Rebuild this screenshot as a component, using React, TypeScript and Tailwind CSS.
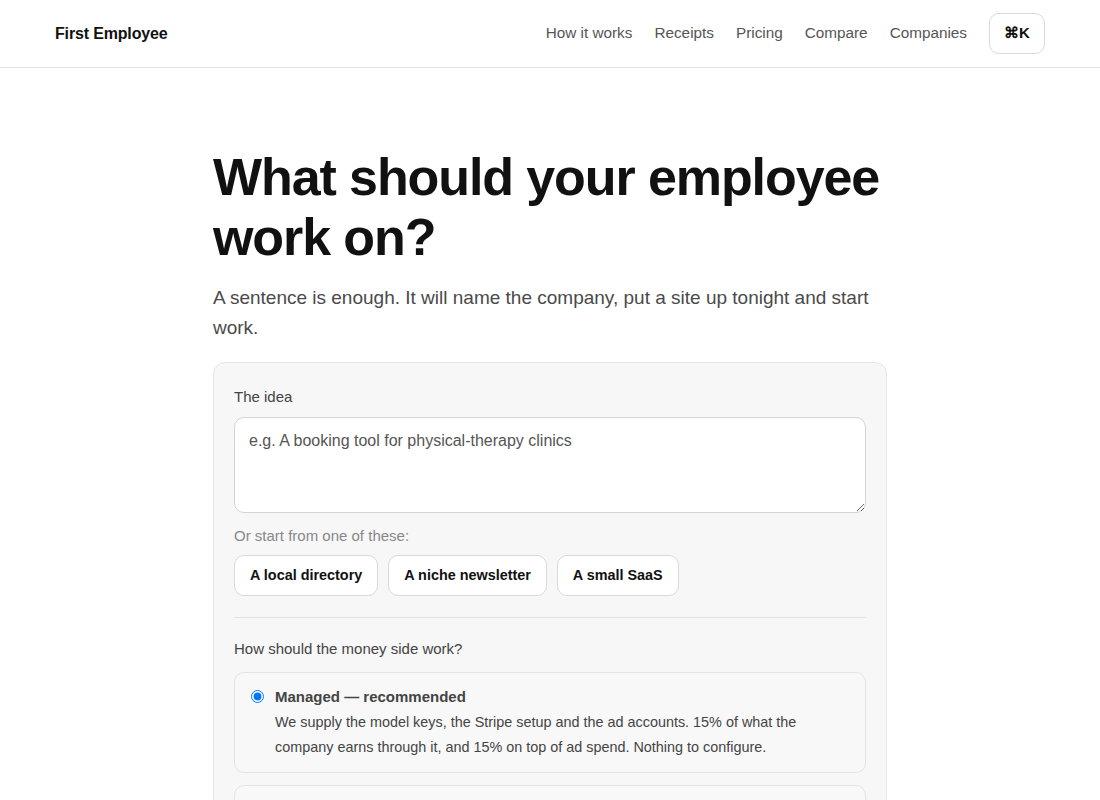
import React from "react";

const font = { fontFamily: '"Liberation Sans", Arial, sans-serif' };

export default function App() {
  return (
    <div className="min-h-screen bg-white text-[#111]" style={font}>
      <header className="h-[68px] border-b border-[#e5e5e5] flex items-center justify-between pl-[55px] pr-[55px]">
        <div className="text-[16px] font-bold tracking-[-0.01em] text-[#111]">First Employee</div>
        <nav className="flex items-center gap-[22px] text-[15.3px] text-[#555]">
          <a>How it works</a>
          <a>Receipts</a>
          <a>Pricing</a>
          <a>Compare</a>
          <a>Companies</a>
          <button className="h-[41px] w-[56px] rounded-[10px] border border-[#d9d9d9] bg-white text-[15px] font-bold text-[#111] flex items-center justify-center">
            ⌘K
          </button>
        </nav>
      </header>
      <main className="w-[674px] mx-auto pt-[79px]">
        <h1 className="text-[52px] leading-[60px] font-bold tracking-[-0.021em] text-[#111]">
          What should your employee work on?
        </h1>
        <p className="mt-[16px] text-[19px] leading-[30px] text-[#4a4a4a]">
          A sentence is enough. It will name the company, put a site up tonight and start work.
        </p>
        <div className="mt-[19px] rounded-[12px] border border-[#e6e6e6] bg-[#f7f7f7] px-[20px] pt-[24px] pb-[40px]">
          <label className="block text-[15px] leading-[20px] text-[#444]">The idea</label>
          <textarea
            className="mt-[10px] block w-full h-[96px] rounded-[10px] border border-[#d4d4d4] bg-white px-[14px] py-[12px] text-[16px] leading-[22px] text-[#111] placeholder:text-[#555] outline-none"
            placeholder="e.g. A booking tool for physical-therapy clinics"
            style={font}
          />
          <div className="mt-[13px] text-[15px] leading-[20px] text-[#888]">Or start from one of these:</div>
          <div className="mt-[9px] flex gap-[10px]">
            {["A local directory", "A niche newsletter", "A small SaaS"].map((t) => (
              <button
                key={t}
                className="h-[41px] px-[15px] rounded-[10px] border border-[#d9d9d9] bg-white text-[14.4px] font-bold text-[#111]"
                style={font}
              >
                {t}
              </button>
            ))}
          </div>
          <div className="mt-[21px] border-t border-[#e2e2e2]" />
          <div className="mt-[21px] text-[15px] leading-[20px] text-[#444]">How should the money side work?</div>
          <div className="mt-[13px] flex flex-col gap-[12px]">
            <label className="flex gap-[11px] rounded-[10px] border border-[#e3e3e3] bg-[#f8f8f8] px-[16px] pt-[14px] pb-[12px]">
              <input type="radio" name="money" defaultChecked className="mt-[3px] w-[13px] h-[13px] m-0 shrink-0" />
              <div>
                <div className="text-[15px] leading-[20px] font-bold text-[#444]">Managed — recommended</div>
                <div className="mt-[3px] text-[14.4px] leading-[25px] text-[#444]">
                  We supply the model keys, the Stripe setup and the ad accounts. 15% of what the company earns through it, and 15% on top of ad spend. Nothing to configure.
                </div>
              </div>
            </label>
            <label className="flex gap-[11px] rounded-[10px] border border-[#e3e3e3] bg-[#f8f8f8] px-[16px] pt-[16px] pb-[12px]">
              <input type="radio" name="money" className="mt-[3px] w-[13px] h-[13px] m-0 shrink-0" />
              <div>
                <div className="text-[15px] leading-[20px] font-bold text-[#444]">Bring your own keys</div>
                <div className="mt-[3px] text-[14.4px] leading-[25px] text-[#444]">
                  Connect your own model provider, Stripe account and ad accounts. A flat monthly fee, nothing taken from revenue.
                </div>
              </div>
            </label>
          </div>
        </div>
      </main>
    </div>
  );
}
